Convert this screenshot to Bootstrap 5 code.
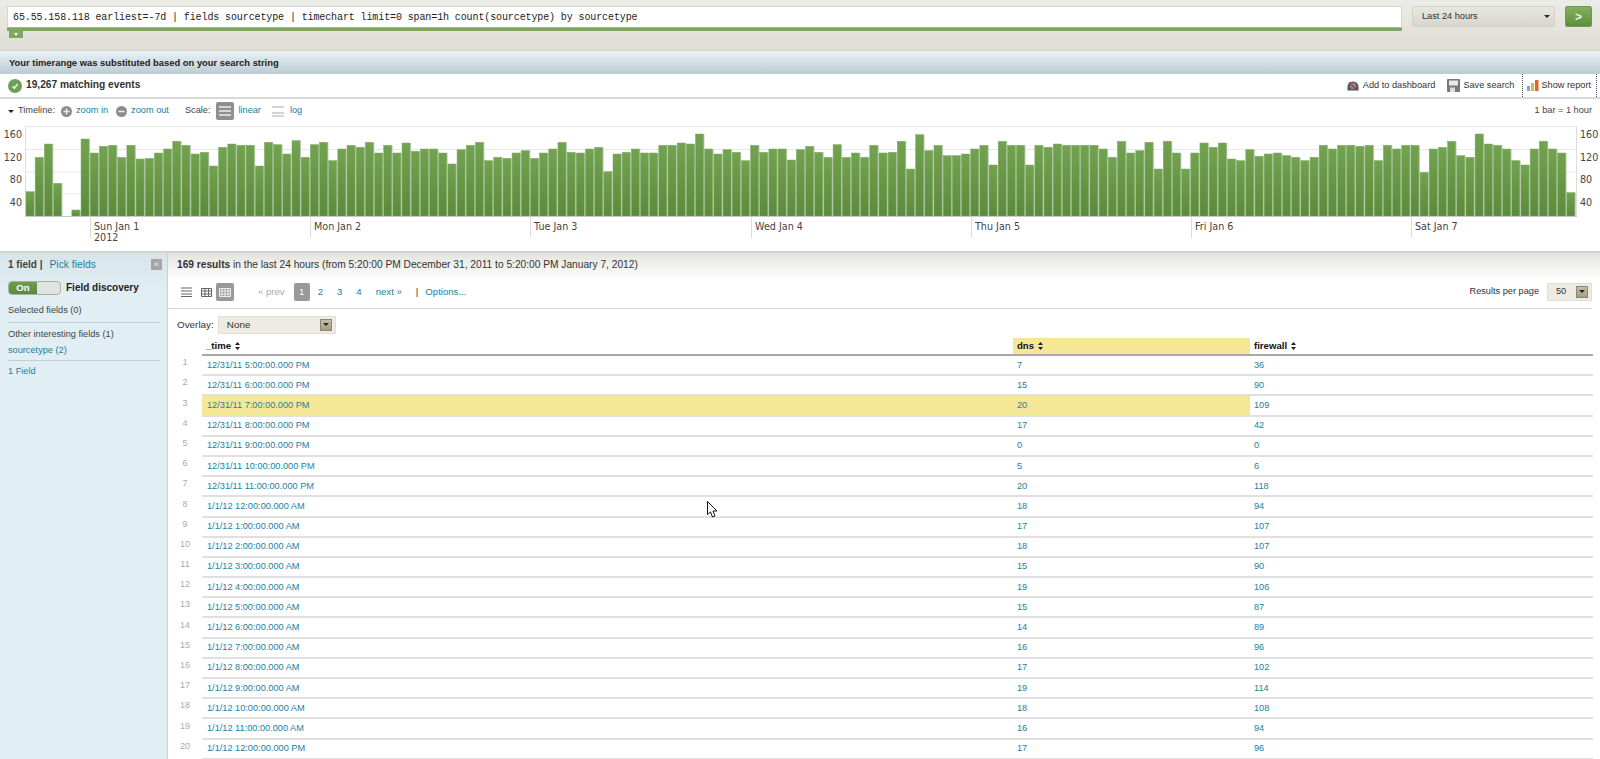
<!DOCTYPE html>
<html lang="en">
  <head>
    <meta charset="UTF-8" />
    <title>Search</title>
    <link href="https://cdn.jsdelivr.net/npm/bootstrap@5.3.0/dist/css/bootstrap.min.css" rel="stylesheet" />
    <style>
      html, body { height: 759px; overflow: hidden; }
      body { font: 9.2px/1.2 "Liberation Sans", Arial, sans-serif; color: #333; background: #fff; position: relative; }
      a { color: #23809f; text-decoration: none; }
      .top-bar { height: 51px; padding: 6px 8px 0 7px; background: linear-gradient(#ecece6, #deded6); border-bottom: 1px solid #cfcfc8; }
      .search-wrap { width: 1395px; position: relative; }
      .search-input { height: 22px; border-radius: 0; border: 1px solid #d6d6d0; border-bottom: 1px solid #aaa; padding: 0 5px; font: 10px "Liberation Mono", monospace; letter-spacing: -.11px; color: #222; box-shadow: none; }
      .search-progress { height: 3px; background: #7ea662; }
      .search-tab { width: 14px; height: 7px; margin-left: 2px; background: #7ea662; position: relative; }
      .search-tab::after { content: ""; position: absolute; left: 5px; top: 2px; border: 2px solid transparent; border-top: 3px solid #fff; border-bottom: 0; }
      .time-btn { width: 143px; height: 21px; margin-left: 10px; padding: 0 4px 0 9px; border: 1px solid #d2d2cb; border-radius: 2px; background: linear-gradient(#e8e8e2, #d6d6ce); font-size: 9.2px; color: #333; }
      .caret-dn { width: 0; height: 0; border: 3px solid transparent; border-top: 3px solid #222; border-bottom: 0; }
      .go-btn { width: 27px; height: 21px; margin-left: 10px; padding: 0; border: 1px solid #6d9a4e; border-radius: 2px; background: linear-gradient(#82b060, #5c8f3c); color: #e6f2da; font-weight: 700; font-size: 12px; line-height: 18px; }
      .msg-strip { height: 23px; padding-left: 9px; background: linear-gradient(#e9f2f7, #bccbd3); font-size: 9.4px; font-weight: 700; color: #222; }
      .events-bar { height: 25px; padding-left: 8px; background: #fff; border-bottom: 2px solid #d8d8d8; }
      .events-count { font-size: 10.2px; font-weight: 700; color: #333; margin-left: 4px; }
      .actn { color: #333; }
      .save-ic { margin-left: 12px; margin-right: 3px; }
      .report-ic { margin-right: 2px; }
      .report-tab { height: 23px; padding: 0 5px 0 4px; margin-left: 8px; margin-right: 3px; border-left: 1px dotted #555; border-right: 1px dotted #555; }
      .timeline-bar { height: 25px; padding: 0 8px 1px 8px; color: #444; }
      .plus-ic { margin-left: 6px; }
      .lin-btn { width: 18px; height: 18px; margin-left: 6px; background: #8f8f8f; border-radius: 2px; }
      .log-ic { margin-left: 11px; }
      .log-link { margin-left: 6px; }
      .chart-box { height: 127px; display: block; }
      .chart-box text { font: 9.6px "DejaVu Sans", sans-serif; fill: #444; }
      .main-area { height: 508px; border-top: 2px solid #d4d4ce; }
      .side-pane { width: 168px; flex: none; padding: 0 8px; background: linear-gradient(#d7e5ea, #e1eef3 40px); border-right: 1px solid #c9d3d6; color: #444; position: relative; }
      .side-head { height: 28px; font-size: 10px; font-weight: 700; padding-bottom: 4px; }
      .side-head a { font-weight: 400; font-size: 10.3px; margin-left: 7px; }
      .collapse-btn { position: absolute; left: 151px; top: 6px; width: 11px; height: 11px; background: #a6a6a6; color: #eee; font-size: 9px; }
      .toggle-box { width: 53px; height: 14px; border: 1px solid #a9b2a2; border-radius: 4px; overflow: hidden; background: #e2e2e2; }
      .toggle-on { width: 28px; height: 100%; background: linear-gradient(#6f9c4f, #5a8a3b); color: #fff; font-size: 9.6px; font-weight: 700; text-align: center; line-height: 12px; }
      .toggle-lbl { font-size: 10px; font-weight: 700; color: #222; margin-left: 5px; }
      .side-rule { height: 1px; background: #c3cfd3; margin: 0; width: 152px; }
      .side-row { height: 16px; line-height: 16px; }
      .side-gap { margin-top: 7px; }
      .rule-a { margin-top: 4px; margin-bottom: 3px; }
      .rule-b { margin-top: 2px; margin-bottom: 2px; }
      .content-pane { padding-right: 8px; min-width: 0; }
      .result-head { height: 27px; padding-left: 9px; margin-right: -8px; background: linear-gradient(#e4e4de, #fff); font-size: 10.2px; line-height: 23px; }
      .tool-row { height: 29px; padding: 0 0 4px 9px; border-bottom: 1px solid #d4d4d4; margin-bottom: 7px; }
      .view-btn { width: 18px; height: 18px; }
      .view-first { margin-right: 2px; }
      .view-btn.on { background: #999; border-radius: 2px; margin-left: 1px; }
      .page-links { margin-left: 24px; gap: 14px; font-size: 9.6px; }
      .page-on { background: #999; color: #fff; width: 16px; height: 18px; line-height: 18px; text-align: center; border-radius: 2px; margin-left: -5px; margin-right: -6px; }
      .opt-link { margin-left: -7px; }
      .page-off { color: #aaa; }
      .tan-select { height: 18px; background: #eeebe3; border: 1px solid #e2dfd6; padding-left: 8px; color: #333; }
      .per-pick { width: 45px; }
      .overlay-pick { width: 118px; margin-left: 4px; }
      .tan-arrow { width: 12px; height: 12px; margin-right: 3px; background: linear-gradient(#c5bdab, #a59c86); border: 1px solid #8d8573; position: relative; }
      .tan-arrow::after { content: ""; position: absolute; left: 2px; top: 3px; border: 3px solid transparent; border-top: 3px solid #222; border-bottom: 0; }
      .overlay-row { height: 18px; padding-left: 9px; margin-bottom: 4px; font-size: 9.9px; }
      .result-table { table-layout: fixed; width: 1425px; margin: 0; font-size: 9.2px; --bs-table-bg: transparent; }
      .result-table th, .result-table td { padding: 0 4px; height: 20.2px; vertical-align: middle; border: 0; border-bottom: 2px solid #e0e0e0; color: #23809f; font-weight: 400; box-shadow: none; white-space: nowrap; }
      .result-table td:nth-child(2) { padding-left: 5px; }
      .result-table thead th { height: 17px; color: #111; font-weight: 700; font-size: 9.6px; border-bottom: 2px solid #a8a8a8; }
      .result-table .row-num { border: 0; color: #aaa; font-size: 9px; text-align: center; padding: 0 0 5px 0; }
      .result-table thead .row-num { border: 0; }
      .result-table .hl { background: #f5e796; }
      .c-num { width: 34px; }
      .c-time { width: 811px; }
      .c-dns { width: 237px; }
      .sort-ic { width: 5px; height: 8px; vertical-align: -1px; margin-left: 1px; }
      .pointer-ic { position: absolute; left: 707px; top: 501px; width: 11px; height: 17px; }
    </style>
  </head>
  <body>
    <div class="top-bar d-flex align-items-start">
      <div class="search-wrap">
        <input class="form-control search-input" type="text" value="65.55.158.118 earliest=-7d | fields sourcetype | timechart limit=0 span=1h count(sourcetype) by sourcetype" />
        <div class="search-progress"></div>
        <div class="search-tab"></div>
      </div>
      <button class="btn time-btn d-flex align-items-center justify-content-between" type="button">Last 24 hours <span class="caret-dn"></span></button>
      <button class="btn go-btn" type="button">&gt;</button>
    </div>

    <div class="msg-strip d-flex align-items-center">Your timerange was substituted based on your search string</div>

    <div class="events-bar d-flex align-items-center">
      <svg width="14" height="14" viewBox="0 0 14 14"><circle cx="7" cy="7" r="7" fill="#6f9f54"/><path d="M4.5 7.2 6.3 9.3 9.6 5" fill="none" stroke="#eef5e6" stroke-width="1.5"/></svg>
      <span class="events-count">19,267 matching events</span>
      <div class="ms-auto d-flex align-items-center">
        <svg width="12" height="12" viewBox="0 0 13 12" class="me-1"><path d="M.5 11V7a6 6 0 0 1 12 0v4z" fill="#555"/><circle cx="6.500" cy="6" r="3.500" fill="#888"/><path d="M2 2 10 10" stroke="#b33" stroke-width="1.200"/></svg>
        <a class="actn" href="#">Add to dashboard</a>
        <svg width="13" height="13" viewBox="0 0 13 13" class="save-ic"><rect width="13" height="13" rx="1" fill="#777"/><rect x="2" y="1.500" width="9" height="5" fill="#e8e8e8"/><rect x="3" y="8.500" width="5" height="4.500" fill="#ddd"/></svg>
        <a class="actn" href="#">Save search</a>
        <div class="report-tab d-flex align-items-center">
          <svg width="12" height="11" viewBox="0 0 12 11" class="report-ic"><rect y="6" width="3" height="5" fill="#6fb0c8"/><rect x="4" y="3" width="3" height="8" fill="#e5b63b"/><rect x="8" y="0" width="3.500" height="11" fill="#d9682b"/></svg>
          <a class="actn" href="#">Show report</a>
        </div>
      </div>
    </div>

    <div class="timeline-bar d-flex align-items-center">
      <span class="caret-dn me-1"></span><span>Timeline:</span>
      <svg width="11" height="11" viewBox="0 0 11 11" class="plus-ic"><circle cx="5.500" cy="5.500" r="5.500" fill="#8c8c8c"/><path d="M2.500 5.500h6M5.500 2.500v6" stroke="#eee" stroke-width="1.500"/></svg>
      <a href="#" class="ms-1">zoom in</a>
      <svg width="11" height="11" viewBox="0 0 11 11" class="ms-2"><circle cx="5.500" cy="5.500" r="5.500" fill="#8c8c8c"/><path d="M2.500 5.500h6" stroke="#eee" stroke-width="1.500"/></svg>
      <a href="#" class="ms-1">zoom out</a>
      <span class="ms-3">Scale:</span>
      <span class="lin-btn d-flex align-items-center justify-content-center"><svg width="12" height="10" viewBox="0 0 12 10"><path d="M0 1h12M0 5h12M0 9h12" stroke="#eee" stroke-width="1.300"/></svg></span>
      <a href="#" class="ms-1">linear</a>
      <svg width="12" height="11" viewBox="0 0 12 11" class="log-ic"><path d="M0 1h12M0 7h12M0 10h12" stroke="#aaa" stroke-width="1"/></svg>
      <a href="#" class="log-link">log</a>
      <span class="ms-auto">1 bar = 1 hour</span>
    </div>

    <svg id="timeChart" class="chart-box" width="1600" height="127" viewBox="0 124 1600 127"></svg>

    <div class="main-area d-flex">
      <div class="side-pane">
        <div class="side-head d-flex align-items-center">1 field | <a href="#">Pick fields</a></div>
        <span class="collapse-btn d-flex align-items-center justify-content-center">&laquo;</span>
        <div class="d-flex align-items-center">
          <div class="toggle-box"><div class="toggle-on">On</div></div>
          <span class="toggle-lbl">Field discovery</span>
        </div>
        <div class="side-row side-gap">Selected fields (0)</div>
        <div class="side-rule rule-a"></div>
        <div class="side-row">Other interesting fields (1)</div>
        <div class="side-row"><a href="#">sourcetype (2)</a></div>
        <div class="side-rule rule-b"></div>
        <div class="side-row"><a href="#">1 Field</a></div>
      </div>

      <div class="content-pane flex-grow-1">
        <div class="result-head"><b>169 results</b> in the last 24 hours (from 5:20:00 PM December 31, 2011 to 5:20:00 PM January 7, 2012)</div>
        <div class="tool-row d-flex align-items-center">
          <span class="view-btn view-first d-flex align-items-center justify-content-center"><svg width="11" height="10" viewBox="0 0 11 10"><path d="M0 1h11M0 4h11M0 7h11M0 9.500h11" stroke="#666"/></svg></span>
          <span class="view-btn d-flex align-items-center justify-content-center"><svg width="11" height="9" viewBox="0 0 11 9"><path d="M.5.500h10v8H.5zM.5 3h10M.5 6h10M4 .500v8M7.500 .500v8" fill="none" stroke="#666"/></svg></span>
          <span class="view-btn on d-flex align-items-center justify-content-center"><svg width="12" height="9" viewBox="0 0 12 9"><path d="M.5.500h11v8H.5zM.5 3h11M.5 6h11M3 .500v8M6 .500v8M9 .500v8" fill="none" stroke="#eee"/></svg></span>
          <div class="page-links d-flex align-items-center">
            <span class="page-off">&laquo; prev</span>
            <span class="page-on">1</span>
            <a href="#">2</a><a href="#">3</a><a href="#">4</a>
            <a href="#">next &raquo;</a>
            <span>|</span>
            <a href="#" class="opt-link">Options...</a>
          </div>
          <div class="ms-auto d-flex align-items-center">
            <span class="me-2">Results per page</span>
            <div class="tan-select per-pick d-flex align-items-center justify-content-between">50 <span class="tan-arrow"></span></div>
          </div>
        </div>
        <div class="overlay-row d-flex align-items-center">
          <span>Overlay:</span>
          <div class="tan-select overlay-pick d-flex align-items-center justify-content-between">None <span class="tan-arrow"></span></div>
        </div>
        <table class="table result-table">
          <colgroup><col class="c-num" /><col class="c-time" /><col class="c-dns" /><col /></colgroup>
          <thead>
            <tr><th class="row-num"></th><th>_time <svg class="sort-ic" viewBox="0 0 5 8"><path d="M0 3 2.500 0 5 3zM0 5h5L2.500 8z" fill="#222"/></svg></th><th class="hl">dns <svg class="sort-ic" viewBox="0 0 5 8"><path d="M0 3 2.500 0 5 3zM0 5h5L2.500 8z" fill="#222"/></svg></th><th>firewall <svg class="sort-ic" viewBox="0 0 5 8"><path d="M0 3 2.500 0 5 3zM0 5h5L2.500 8z" fill="#222"/></svg></th></tr>
          </thead>
          <tbody id="rowsBody"></tbody>
        </table>
      </div>
    </div>

    <svg class="pointer-ic" viewBox="0 0 11 17"><path d="M.5.500v13l3-2.500 2 5 2.500-1-2-5h4z" fill="#fff" stroke="#111"/></svg>

    <script>
      // bar tops read off the reference, in px above the axis x3
      const tops = [215,112,72,190,288,270,57,99,79,76,112,76,117,115,99,87,64,76,102,97,138,82,72,76,76,138,67,74,102,62,112,74,67,122,87,76,82,67,99,76,99,69,94,87,87,99,132,89,76,67,122,112,115,99,92,115,99,87,67,97,99,87,82,155,102,97,87,99,99,76,76,69,72,42,87,102,89,97,122,76,97,87,87,120,89,79,97,112,74,112,99,112,76,99,97,64,147,44,92,76,107,107,102,87,76,135,64,76,76,135,76,82,72,76,76,76,76,87,112,64,99,92,67,147,64,99,147,99,69,82,69,117,122,89,109,102,99,107,112,122,112,76,87,76,76,79,76,122,76,87,76,76,157,87,82,64,107,112,42,72,76,87,122,135,87,64,87,99,218];
      const days = [[7,"Sun Jan 1"],[31,"Mon Jan 2"],[55,"Tue Jan 3"],[79,"Wed Jan 4"],[103,"Thu Jan 5"],[127,"Fri Jan 6"],[151,"Sat Jan 7"]];
      const left = 26, pitch = 1550 / 169, base = 216;

      let svg = '<defs><linearGradient id="barFill" x1="0" y1="0" x2="0" y2="1"><stop offset="0" stop-color="#72a34f"/><stop offset="1" stop-color="#5b8a3c"/></linearGradient></defs>';
      [126, 149, 171.500, 193.500].forEach((y) => {
        svg += `<rect x="${left}" y="${y}" width="1550" height="1" fill="#e8e8e8"/>`;
      });
      svg += `<rect x="${left - 1}" y="126" width="1" height="91" fill="#ddd"/><rect x="1576" y="126" width="1" height="91" fill="#ddd"/>`;
      tops.forEach((t, i) => {
        const h = (288 - t) / 3;
        if (h <= 0) return;
        const x = left + i * pitch;
        svg += `<rect x="${x + 8}" y="${base - h}" width="1" height="${h}" fill="#c5d3ba"/>`;
        svg += `<rect x="${x}" y="${base - h}" width="8" height="${h}" fill="url(#barFill)" stroke="#7fa866" stroke-width=".5"/>`;
      });
      svg += `<rect x="${left - 1}" y="216" width="1552" height="1" fill="#c9c9c9"/>`;
      days.forEach(([i, label]) => {
        const x = Math.round(left + i * pitch);
        svg += `<rect x="${x}" y="217" width="1" height="21" fill="#ddd"/><text x="${x + 4}" y="230">${label}</text>`;
      });
      svg += '<text x="94" y="241">2012</text>';
      [[160, 138], [120, 161], [80, 183], [40, 206]].forEach(([v, y]) => {
        svg += `<text x="22" y="${y}" text-anchor="end">${v}</text><text x="1580" y="${y}">${v}</text>`;
      });
      document.getElementById("timeChart").innerHTML = svg;

      const rows = [["12/31/11 5:00:00.000 PM",7,36],["12/31/11 6:00:00.000 PM",15,90],["12/31/11 7:00:00.000 PM",20,109],["12/31/11 8:00:00.000 PM",17,42],["12/31/11 9:00:00.000 PM",0,0],["12/31/11 10:00:00.000 PM",5,6],["12/31/11 11:00:00.000 PM",20,118],["1/1/12 12:00:00.000 AM",18,94],["1/1/12 1:00:00.000 AM",17,107],["1/1/12 2:00:00.000 AM",18,107],["1/1/12 3:00:00.000 AM",15,90],["1/1/12 4:00:00.000 AM",19,106],["1/1/12 5:00:00.000 AM",15,87],["1/1/12 6:00:00.000 AM",14,89],["1/1/12 7:00:00.000 AM",16,96],["1/1/12 8:00:00.000 AM",17,102],["1/1/12 9:00:00.000 AM",19,114],["1/1/12 10:00:00.000 AM",18,108],["1/1/12 11:00:00.000 AM",16,94],["1/1/12 12:00:00.000 PM",17,96]];
      document.getElementById("rowsBody").innerHTML = rows.map((r, i) => {
        const hl = i === 2 ? ' class="hl"' : "";
        return `<tr><td class="row-num">${i + 1}</td><td${hl}>${r[0]}</td><td${hl}>${r[1]}</td><td>${r[2]}</td></tr>`;
      }).join("");
    </script>
  </body>
</html>
